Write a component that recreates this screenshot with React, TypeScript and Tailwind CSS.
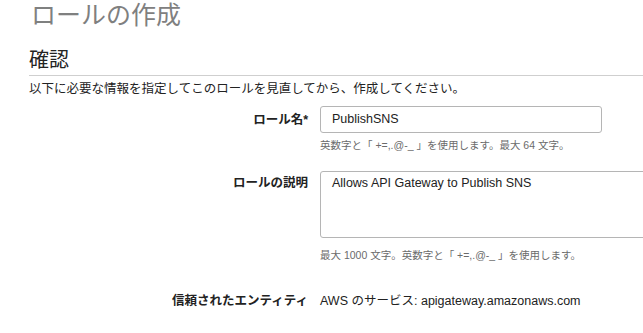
import React from "react";

export default function App() {
  const font = {
    fontFamily: '"Liberation Sans", "Noto Sans CJK JP", sans-serif',
  };
  return (
    <div
      className="w-[643px] h-[333px] overflow-hidden bg-white text-[#16191f]"
      style={font}
    >
      <h1 className="pl-[31px] h-[30px] text-[25px] leading-[30px] text-[#7f8080] font-normal">
        ロールの作成
      </h1>
      <div className="pl-[29px]">
        <h2 className="mt-[18px] text-[20px] leading-[24px] font-normal text-[#232323] pb-[3px] border-b border-[#cfcfcf]">
          確認
        </h2>
        <p className="mt-[4px] text-[12.5px] leading-[18px] text-[#222]">
          以下に必要な情報を指定してこのロールを見直してから、作成してください。
        </p>

        <div className="mt-[8px] flex items-center">
          <div className="w-[279px] shrink-0 text-right text-[12.5px] leading-[18px] font-bold text-[#222]">
            ロール名*
          </div>
          <div className="ml-[12px] w-[282px] shrink-0 h-[27px] rounded-[3px] border border-[#b5b5b5] flex items-center pl-[11px] text-[12.5px] text-[#222]">
            PublishSNS
          </div>
        </div>
        <div className="mt-[5px] pl-[291px] text-[10.5px] leading-[14px] text-[#6b6b6b] whitespace-nowrap">
          英数字と「 +=,.@-_ 」を使用します。最大 64 文字。
        </div>

        <div className="mt-[19px] flex items-start">
          <div className="w-[279px] shrink-0 pt-[3px] text-right text-[12.5px] leading-[18px] font-bold text-[#222]">
            ロールの説明
          </div>
          <div className="ml-[12px] w-[340px] shrink-0 h-[67px] rounded-[3px] border border-[#b5b5b5] pl-[11px] pt-[2px] text-[12.5px] leading-[18px] text-[#222]">
            Allows API Gateway to Publish SNS
          </div>
        </div>
        <div className="mt-[10px] pl-[291px] text-[10.5px] leading-[14px] text-[#6b6b6b] whitespace-nowrap">
          最大 1000 文字。英数字と「 +=,.@-_ 」を使用します。
        </div>

        <div className="mt-[30px] flex items-center">
          <div className="w-[279px] shrink-0 text-right text-[12.5px] leading-[18px] font-bold text-[#222]">
            信頼されたエンティティ
          </div>
          <div className="ml-[12px] text-[12.5px] leading-[18px] text-[#222] whitespace-nowrap">
            AWS のサービス: apigateway.amazonaws.com
          </div>
        </div>
      </div>
    </div>
  );
}
